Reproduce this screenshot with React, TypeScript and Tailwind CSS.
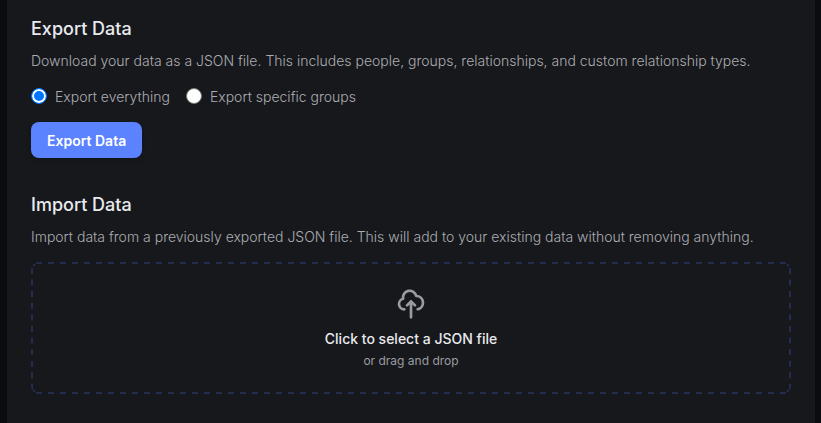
import { useState } from "react";

const exportModes = [
  { value: "all", label: "Export everything" },
  { value: "groups", label: "Export specific groups" },
];

const UploadIcon = () => (
  <svg
    className="h-8 w-8 text-[#9b9ca1]"
    fill="none"
    viewBox="0 0 24 24"
    stroke="currentColor"
    aria-hidden="true"
  >
    <path
      strokeLinecap="round"
      strokeLinejoin="round"
      strokeWidth={2}
      d="M7 16a4 4 0 01-.88-7.903A5 5 0 1115.9 6L16 6a5 5 0 011 9.9M15 13l-3-3m0 0l-3 3m3-3v12"
    />
  </svg>
);

const DashedOutline = () => (
  <svg
    className="pointer-events-none absolute inset-0 h-full w-full rounded-lg text-[#242c4f]"
    stroke="currentColor"
    aria-hidden="true"
  >
    <g strokeWidth={4} strokeDasharray="6 6" strokeDashoffset={7}>
      <line x1="0" y1="0" x2="100%" y2="0" />
      <line x1="0" y1="100%" x2="100%" y2="100%" />
    </g>
    <g strokeWidth={4} strokeDasharray="6 5.6" strokeDashoffset={5.7}>
      <line x1="0" y1="0" x2="0" y2="100%" />
      <line x1="100%" y1="0" x2="100%" y2="100%" />
    </g>
    <g fill="currentColor" stroke="none">
      <circle cx="0" cy="0" r="1.3" transform="translate(3 3)" />
      <circle cx="100%" cy="0" r="1.3" transform="translate(-3 3)" />
      <circle cx="0" cy="100%" r="1.3" transform="translate(3 -3)" />
      <circle cx="100%" cy="100%" r="1.3" transform="translate(-3 -3)" />
    </g>
  </svg>
);

const ExportSection = () => {
  const [mode, setMode] = useState("all");

  return (
    <section>
      <h2 className="mb-2 text-lg font-medium text-[#e9eaee]">Export Data</h2>
      <p className="mb-4 text-sm font-light text-[#acadb2]">
        Download your data as a JSON file. This includes people, groups,
        relationships, and custom relationship types.
      </p>

      <div className="mb-[15px] flex flex-wrap gap-4">
        {exportModes.map(({ value, label }) => (
          <label
            key={value}
            className="flex items-start gap-2 text-sm font-light text-[#acadb2]"
          >
            <input
              type="radio"
              name="export-mode"
              value={value}
              checked={mode === value}
              onChange={() => setMode(value)}
              className="mt-px h-4 w-4 appearance-none rounded-full border border-[#767676] bg-white checked:border-[#0075ff] checked:bg-[#0075ff] checked:shadow-[inset_0_0_0_2px_white]"
            />
            {label}
          </label>
        ))}
      </div>

      <button
        type="button"
        className="rounded-lg bg-[#5b82ff] px-4 pt-[9px] pb-[7px] text-sm font-semibold text-white shadow-md shadow-black/10"
      >
        Export Data
      </button>
    </section>
  );
};

const ImportSection = () => (
  <section>
    <h2 className="mb-2 text-lg font-medium text-[#e9eaee]">Import Data</h2>
    <p className="mb-[15px] text-sm font-light text-[#acadb2]">
      Import data from a previously exported JSON file. This will add to your
      existing data without removing anything.
    </p>

    <button
      type="button"
      className="relative flex w-full flex-col items-center rounded-lg px-6 pt-[26px] pb-[25px]"
    >
      <DashedOutline />
      <UploadIcon />
      <span className="mt-[9px] text-sm font-medium text-[#e9eaee]">
        Click to select a JSON file
      </span>
      <span className="mt-1 text-xs text-[#9b9ca1]">or drag and drop</span>
    </button>
  </section>
);

const App = () => {
  return (
    <div className="min-h-screen bg-[#0b0c10] pr-1.5 pl-[7px] font-['Inter',sans-serif]">
      <main className="flex min-h-screen flex-col gap-[33px] bg-[#17181c] px-6 pt-[15px] pb-7">
        <ExportSection />
        <ImportSection />
      </main>
    </div>
  );
};

export default App;
